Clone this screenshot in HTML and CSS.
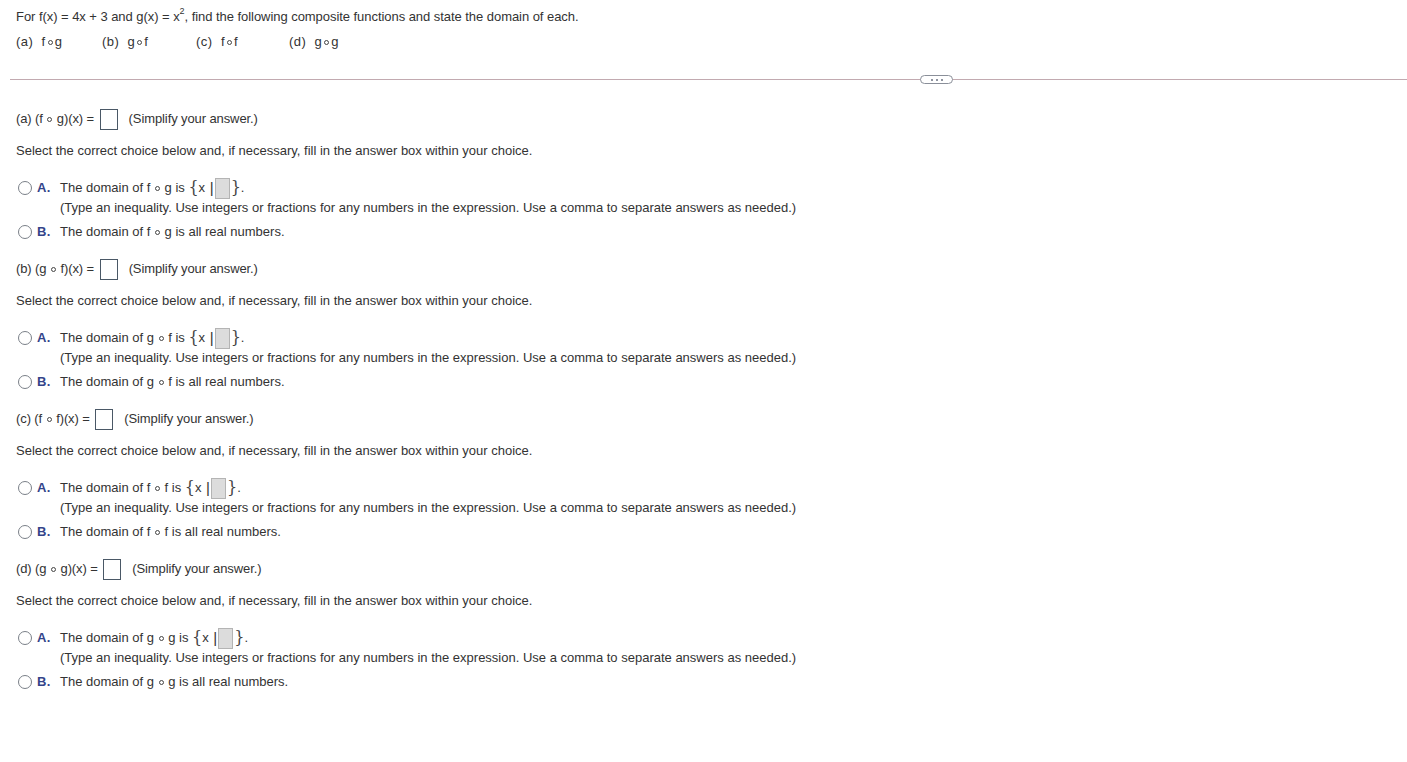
FILE: index.html
```html
<!DOCTYPE html>
<html lang="en">
<head>
    <meta charset="UTF-8">
    <title>Composite functions</title>
    <link rel="stylesheet" href="styles.css">
</head>
<body>
    <!-- 题目 -->
    <header class="question">
        <p class="stem">For f(x) = 4x + 3 and g(x) = x<sup>2</sup>, find the following composite functions and state the domain of each.</p>
        <div class="parts">
            <span class="part-label">(a)&nbsp; f<i class="comp"></i>g</span>
            <span class="part-label">(b)&nbsp; g<i class="comp"></i>f</span>
            <span class="part-label">(c)&nbsp; f<i class="comp"></i>f</span>
            <span class="part-label">(d)&nbsp; g<i class="comp"></i>g</span>
        </div>
    </header>

    <div class="divider">
        <button class="more" aria-label="more"><i></i><i></i><i></i></button>
    </div>

    <!-- 作答区 -->
    <main class="answers">
        <section class="part">
            <div class="eq">(a) (f <i class="comp"></i> g)(x) = <span class="box"></span><span class="hint">(Simplify your answer.)</span></div>
            <p class="select">Select the correct choice below and, if necessary, fill in the answer box within your choice.</p>
            <div class="choice">
                <span class="radio"></span><b class="letter">A.</b>
                <div class="choice-text">
                    <div class="choice-main">The domain of f <i class="comp"></i> g is <span class="brace">{</span>x <span class="bar">|</span><span class="gbox"></span><span class="brace">}</span>.</div>
                    <div>(Type an inequality. Use integers or fractions for any numbers in the expression. Use a comma to separate answers as needed.)</div>
                </div>
            </div>
            <div class="choice">
                <span class="radio"></span><b class="letter">B.</b>
                <div class="choice-text">The domain of f <i class="comp"></i> g is all real numbers.</div>
            </div>
        </section>

        <section class="part">
            <div class="eq">(b) (g <i class="comp"></i> f)(x) = <span class="box"></span><span class="hint">(Simplify your answer.)</span></div>
            <p class="select">Select the correct choice below and, if necessary, fill in the answer box within your choice.</p>
            <div class="choice">
                <span class="radio"></span><b class="letter">A.</b>
                <div class="choice-text">
                    <div class="choice-main">The domain of g <i class="comp"></i> f is <span class="brace">{</span>x <span class="bar">|</span><span class="gbox"></span><span class="brace">}</span>.</div>
                    <div>(Type an inequality. Use integers or fractions for any numbers in the expression. Use a comma to separate answers as needed.)</div>
                </div>
            </div>
            <div class="choice">
                <span class="radio"></span><b class="letter">B.</b>
                <div class="choice-text">The domain of g <i class="comp"></i> f is all real numbers.</div>
            </div>
        </section>

        <section class="part">
            <div class="eq">(c) (f <i class="comp"></i> f)(x) = <span class="box"></span><span class="hint">(Simplify your answer.)</span></div>
            <p class="select">Select the correct choice below and, if necessary, fill in the answer box within your choice.</p>
            <div class="choice">
                <span class="radio"></span><b class="letter">A.</b>
                <div class="choice-text">
                    <div class="choice-main">The domain of f <i class="comp"></i> f is <span class="brace">{</span>x <span class="bar">|</span><span class="gbox"></span><span class="brace">}</span>.</div>
                    <div>(Type an inequality. Use integers or fractions for any numbers in the expression. Use a comma to separate answers as needed.)</div>
                </div>
            </div>
            <div class="choice">
                <span class="radio"></span><b class="letter">B.</b>
                <div class="choice-text">The domain of f <i class="comp"></i> f is all real numbers.</div>
            </div>
        </section>

        <section class="part">
            <div class="eq">(d) (g <i class="comp"></i> g)(x) = <span class="box"></span><span class="hint">(Simplify your answer.)</span></div>
            <p class="select">Select the correct choice below and, if necessary, fill in the answer box within your choice.</p>
            <div class="choice">
                <span class="radio"></span><b class="letter">A.</b>
                <div class="choice-text">
                    <div class="choice-main">The domain of g <i class="comp"></i> g is <span class="brace">{</span>x <span class="bar">|</span><span class="gbox"></span><span class="brace">}</span>.</div>
                    <div>(Type an inequality. Use integers or fractions for any numbers in the expression. Use a comma to separate answers as needed.)</div>
                </div>
            </div>
            <div class="choice">
                <span class="radio"></span><b class="letter">B.</b>
                <div class="choice-text">The domain of g <i class="comp"></i> g is all real numbers.</div>
            </div>
        </section>
    </main>
</body>
</html>
```

FILE: styles.css
```css
/* ========== 基础 ========== */
:root {
    --text: #333;
    --letter: #34448a;
    --line: #c2aab0;
}

* {
    margin: 0;
    padding: 0;
    box-sizing: border-box;
}

body {
    background: #fff;
    color: var(--text);
    font: 13px/20px 'Liberation Sans', Arial, sans-serif;
}

/* 复合运算符 ∘ */
.comp {
    display: inline-block;
    width: 5px;
    height: 5px;
    border: 1px solid #444;
    border-radius: 50%;
    margin: 0 1px;
    vertical-align: 1px;
}

/* ========== 题目 ========== */
.question {
    padding: 7px 0 0 16px;
}

.stem {
    letter-spacing: -0.05px;
}

.stem sup {
    font-size: 9px;
    line-height: 0;
    vertical-align: 7px;
}

.parts {
    display: flex;
    margin-top: 5px;
}

.parts .comp { margin: 0 2px; }

.part-label { width: 86px; letter-spacing: 0.5px; }
.part-label:nth-child(2) { width: 94px; }
.part-label:nth-child(3) { width: 93px; }

/* ========== 分隔线 ========== */
.divider {
    position: relative;
    height: 1px;
    margin: 27px 0 0 10px;
    background: var(--line);
}

.more {
    position: absolute;
    left: 910px;
    top: -4px;
    width: 33px;
    height: 9px;
    border: 1px solid #8a8f99;
    border-radius: 5px;
    background: #fff;
    display: flex;
    align-items: center;
    justify-content: center;
    gap: 3px;
}

.more i {
    width: 2px;
    height: 2px;
    background: #6a7080;
    border-radius: 50%;
}

/* ========== 作答区 ========== */
.answers {
    padding: 29px 0 0 16px;
}

.part {
    padding-bottom: 17px;
}

.eq {
    display: flex;
    align-items: center;
    height: 20px;
    white-space: pre;
    letter-spacing: -0.1px;
}

.box {
    width: 18px;
    height: 21px;
    border: 1px solid #4a5866;
    margin-left: 2px;
}

.hint {
    margin-left: 11px;
}

.select {
    margin-top: 12px;
}

.choice {
    display: flex;
    align-items: flex-start;
    margin-top: 17px;
}

.choice + .choice {
    margin-top: 4px;
}

.radio {
    width: 14px;
    height: 14px;
    border: 1px solid #7a7f88;
    border-radius: 50%;
    margin: 3px 0 0 2px;
}

.letter {
    width: 23px;
    margin-left: 5px;
    color: var(--letter);
    font-weight: bold;
    letter-spacing: 0.3px;
}

.choice-main {
    display: flex;
    align-items: center;
    height: 20px;
    white-space: pre;
}

.brace {
    font: 16px/20px 'DejaVu Serif', serif;
    color: #444;
}

.bar {
    font-size: 15px;
    margin: 0 1px;
}

.gbox {
    width: 15px;
    height: 21px;
    background: #dcdcdc;
    border: 1px solid #b4b4b4;
    margin-right: 1px;
}
```
